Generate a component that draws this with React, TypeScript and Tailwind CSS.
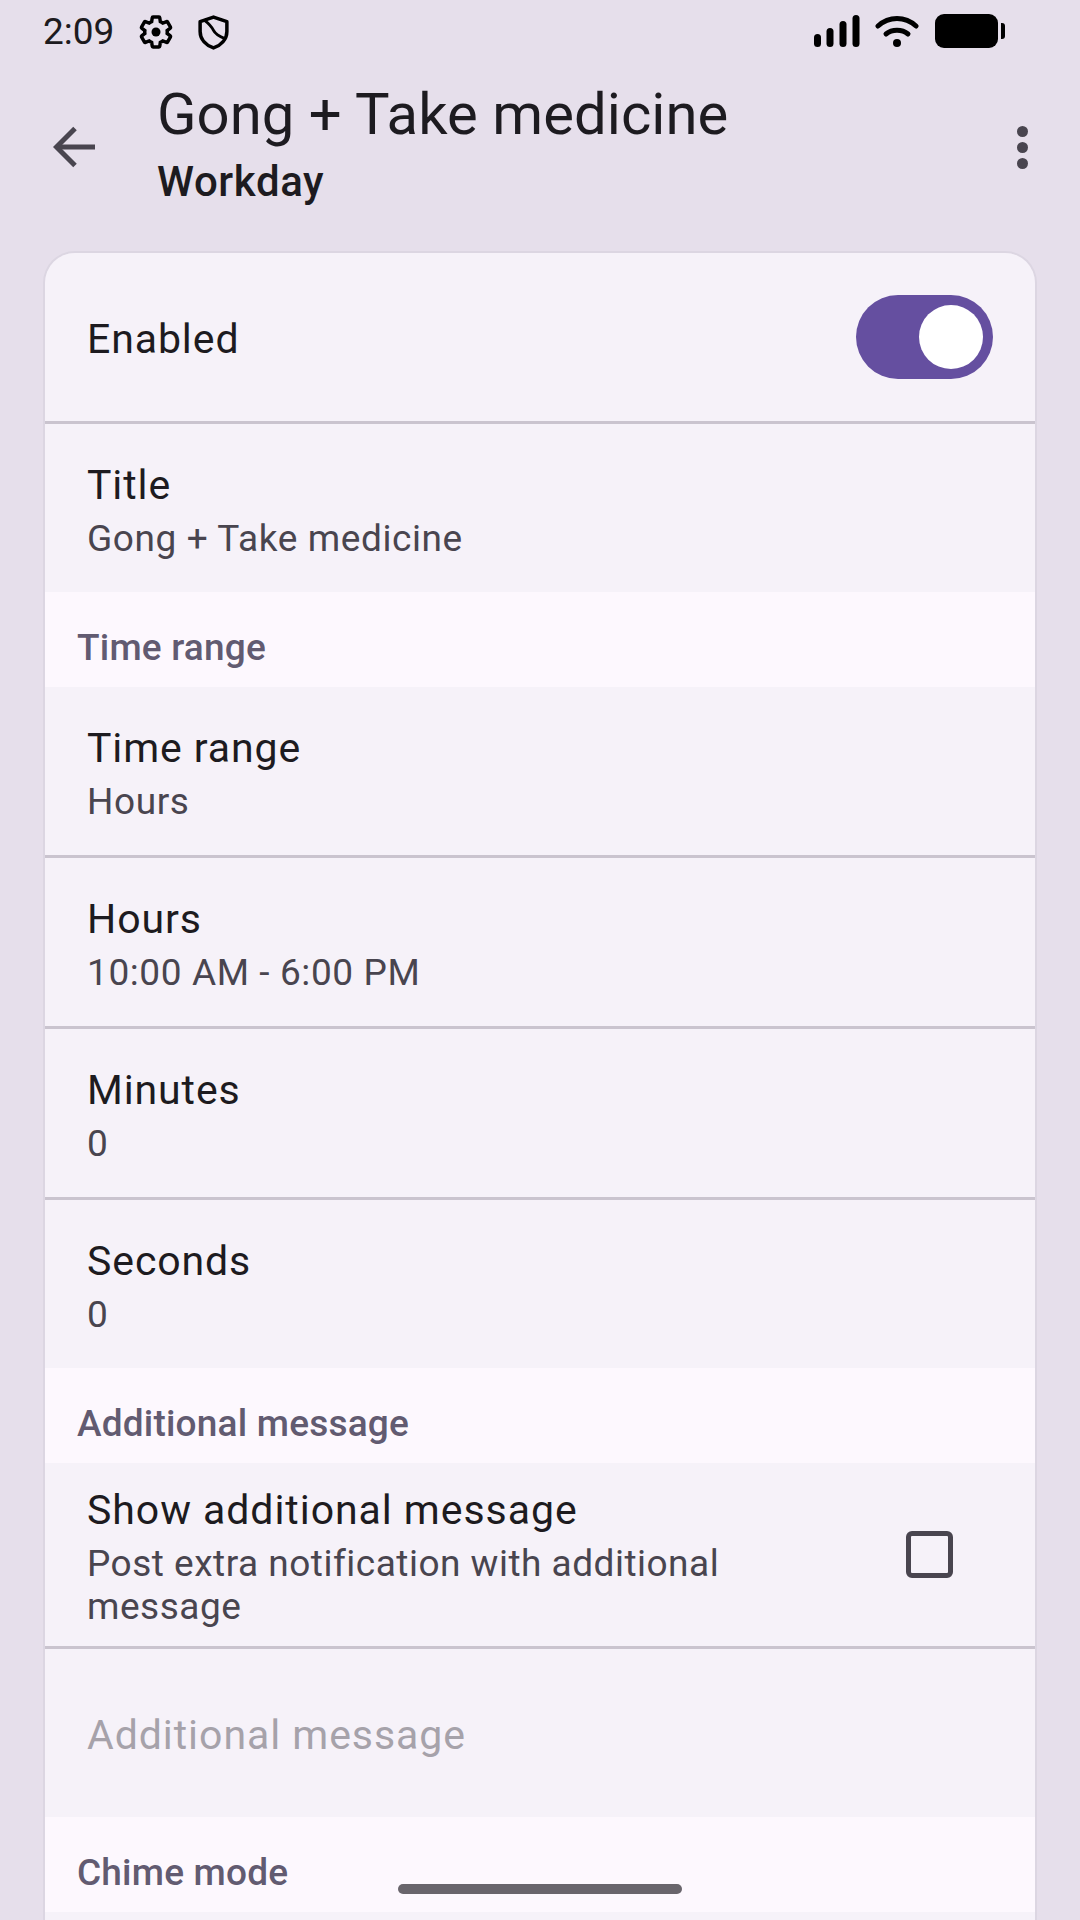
const font = "font-['Roboto',sans-serif]";

function StatusBar() {
  return (
    <div className="flex h-[64px] items-start justify-between pl-[43px] pr-[75px] pt-[14px]">
      <div className="flex items-center">
        <span className="w-[95px] text-[37px] leading-[34px] text-[#1d1b20]">2:09</span>
        <svg viewBox="0 0 24 24" className="size-[36px]" fill="none" stroke="#000" strokeWidth="2.3">
          <path d="M19.43 12.98c.04-.32.07-.64.07-.98 0-.34-.03-.66-.07-.98l2.11-1.65c.19-.15.24-.42.12-.64l-2-3.46c-.09-.16-.26-.25-.44-.25-.06 0-.12.01-.17.03l-2.49 1c-.52-.4-1.08-.73-1.69-.98l-.38-2.65C14.46 2.18 14.25 2 14 2h-4c-.25 0-.46.18-.49.42l-.38 2.65c-.61.25-1.17.59-1.69.98l-2.49-1c-.06-.02-.12-.03-.18-.03-.17 0-.34.09-.43.25l-2 3.46c-.13.22-.07.49.12.64l2.11 1.65c-.04.32-.07.65-.07.98 0 .33.03.66.07.98l-2.11 1.65c-.19.15-.24.42-.12.64l2 3.46c.09.16.26.25.44.25.06 0 .12-.01.17-.03l2.49-1c.52.4 1.08.73 1.69.98l.38 2.65c.03.24.24.42.49.42h4c.25 0 .46-.18.49-.42l.38-2.65c.61-.25 1.17-.59 1.69-.98l2.49 1c.06.02.12.03.18.03.17 0 .34-.09.43-.25l2-3.46c.12-.22.07-.49-.12-.64l-2.11-1.65z" />
          <circle cx="12" cy="12" r="3" fill="#000" stroke="none" />
        </svg>
        <svg viewBox="0 0 30 34" className="ml-[24px] h-[35px] w-[31px]" fill="none" stroke="#000" strokeWidth="3.4" strokeLinejoin="round">
          <path d="M15 2 L28 6.5 V16 C28 24 22 29.5 15 32 C8 29.5 2 24 2 16 V6.5 Z" />
          <path d="M6 5 C10 8 13 11 15 15 C17 19 21 21 26 23" strokeWidth="2.8" />
        </svg>
      </div>
      <div className="flex items-start">
        <svg viewBox="0 0 46 32" className="mt-px h-[32px] w-[46px]" fill="#000">
          <rect x="0" y="19" width="7" height="13" rx="3.5" />
          <rect x="12.5" y="13" width="7" height="19" rx="3.5" />
          <rect x="25.5" y="6" width="7" height="26" rx="3.5" />
          <rect x="38.5" y="0" width="7" height="32" rx="3.5" />
        </svg>
        <svg viewBox="0 0 44 33" className="ml-[15px] mt-px h-[33px] w-[44px]" fill="none" stroke="#000" strokeWidth="5" strokeLinecap="round">
          <path d="M3 11 C14 1 30 1 41 11" />
          <path d="M11 19 C17 14 27 14 33 19" />
          <circle cx="22" cy="28" r="4" fill="#000" stroke="none" />
        </svg>
        <div className="ml-[16px] h-[34px] w-[63px] rounded-[9px] bg-black" />
        <div className="ml-[3px] mt-[9px] h-[16px] w-[4px] rounded-r-[3px] bg-black" />
      </div>
    </div>
  );
}

function TopBar() {
  return (
    <div className="flex h-[187px] items-start">
      <div className="flex w-[157px] shrink-0 pl-[53px] pt-[62px]">
        <svg viewBox="0 0 42 42" className="size-[42px]" fill="none" stroke="#49454f" strokeWidth="5">
          <path d="M42 21 H4" />
          <path d="M22 2.5 L3.5 21 L22 39.5" />
        </svg>
      </div>
      <div className="flex-1 pt-[18px]">
        <div className="text-[58px] leading-[64px] tracking-[0.05px] text-[#1d1b20]">Gong + Take medicine</div>
        <div className="mt-[13px] text-[42px] font-medium leading-[46px] tracking-[0.6px] text-[#1d1b20]">Workday</div>
      </div>
      <div className="mr-[52px] mt-[60px] flex w-[12px] flex-col items-center gap-[5px] pt-[2px]">
        <div className="size-[11px] rounded-full bg-[#49454f]" />
        <div className="size-[11px] rounded-full bg-[#49454f]" />
        <div className="size-[11px] rounded-full bg-[#49454f]" />
      </div>
    </div>
  );
}

function Row({ title, sub, divider = true }: { title: string; sub: string; divider?: boolean }) {
  return (
    <div className={divider ? "flex h-[171px] flex-col justify-center border-b-[3px] border-[#cac4cf] bg-[#f6f2f9] px-[42px] pt-[4px]" : "flex h-[168px] flex-col justify-center bg-[#f6f2f9] px-[42px] pt-[4px]"}>
      <div className="text-[41px] leading-[50px] tracking-[0.9px] text-[#1d1b20]">{title}</div>
      <div className="mt-[7px] text-[37px] leading-[43px] tracking-[0.6px] text-[#49454f]">{sub}</div>
    </div>
  );
}

function SectionHeader({ label }: { label: string }) {
  return (
    <div className="flex h-[95px] items-end bg-[#fdf8fe] pb-[17px] pl-[32px]">
      <span className="text-[37px] font-medium leading-[44px] tracking-[0.2px] text-[#625b71]">{label}</span>
    </div>
  );
}

export default function App() {
  return (
    <div className={`${font} relative h-[1920px] w-[1080px] overflow-hidden bg-[#e6dfeb]`}>
      <StatusBar />
      <TopBar />
      <div className="mx-[43px] overflow-hidden rounded-t-[32px] border-x-2 border-t-2 border-[#dcd6e2]">
        <div className="flex h-[171px] items-center justify-between border-b-[3px] border-[#cac4cf] bg-[#f6f2f9] px-[42px]">
          <span className="pt-[6px] text-[41px] tracking-[0.9px] text-[#1d1b20]">Enabled</span>
          <div className="flex h-[84px] w-[137px] items-center justify-end rounded-full bg-[#654fa0] pr-[10px]">
            <div className="size-[64px] rounded-full bg-white" />
          </div>
        </div>
        <Row title="Title" sub="Gong + Take medicine" divider={false} />
        <SectionHeader label="Time range" />
        <Row title="Time range" sub="Hours" />
        <Row title="Hours" sub="10:00 AM - 6:00 PM" />
        <Row title="Minutes" sub="0" />
        <Row title="Seconds" sub="0" divider={false} />
        <SectionHeader label="Additional message" />
        <div className="flex h-[186px] items-center border-b-[3px] border-[#cac4cf] bg-[#f6f2f9] pl-[42px] pr-[82px]">
          <div className="w-[690px] pt-[4px]">
            <div className="text-[41px] leading-[50px] tracking-[0.95px] text-[#1d1b20]">Show additional message</div>
            <div className="mt-[7px] text-[37px] leading-[43px] tracking-[0.5px] text-[#49454f]">Post extra notification with additional message</div>
          </div>
          <div className="ml-auto size-[47px] rounded-[6px] border-[5px] border-[#49454f]" />
        </div>
        <div className="flex h-[168px] items-center bg-[#f6f2f9] px-[42px] pt-[5px]">
          <span className="text-[41px] tracking-[0.95px] text-[#a6a2aa]">Additional message</span>
        </div>
        <SectionHeader label="Chime mode" />
        <div className="h-[60px] bg-[#f6f2f9]" />
      </div>
      <div className="absolute bottom-[26px] left-[398px] h-[10px] w-[284px] rounded-full bg-[#69656c]" />
    </div>
  );
}
